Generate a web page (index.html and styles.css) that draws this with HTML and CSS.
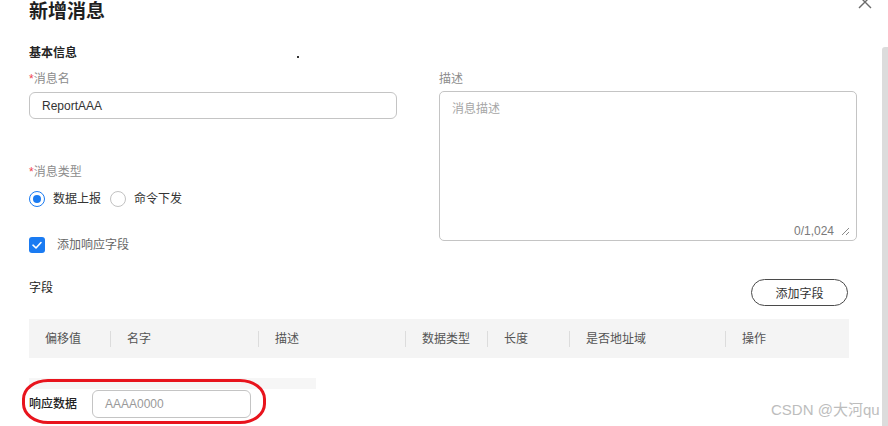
FILE: index.html
```html
<!DOCTYPE html>
<html lang="zh-CN">
<head>
    <meta charset="UTF-8">
    <meta name="viewport" content="width=device-width, initial-scale=1.0">
    <title>新增消息</title>
    <link rel="stylesheet" href="styles.css">
</head>
<body>
    <div class="dialog">
        <h1 class="title">新增消息</h1>
        <div class="close">
            <svg width="16" height="16" viewBox="0 0 16 16"><path d="M2 2 L14 14 M14 2 L2 14" stroke="#6b6b6b" stroke-width="1.4" fill="none"/></svg>
        </div>

        <div class="section-title">基本信息<span class="dot"></span></div>

        <div class="form-grid">
            <div class="col">
                <div class="label"><span class="req">*</span>消息名</div>
                <div class="input name-input">ReportAAA</div>

                <div class="label type-label"><span class="req">*</span>消息类型</div>
                <div class="radios">
                    <div class="radio-item"><span class="radio checked"></span>数据上报</div>
                    <div class="radio-item"><span class="radio"></span>命令下发</div>
                </div>

                <div class="check-row">
                    <span class="checkbox">
                        <svg width="16" height="16" viewBox="0 0 16 16"><path d="M4 8.2 L7 11 L12 5.5" stroke="#fff" stroke-width="1.6" fill="none" stroke-linecap="round" stroke-linejoin="round"/></svg>
                    </span>
                    添加响应字段
                </div>
            </div>
            <div class="col">
                <div class="label desc-label">描述</div>
                <div class="textarea">
                    <span class="placeholder">消息描述</span>
                    <span class="counter">0/1,024
                        <svg width="9" height="9" viewBox="0 0 9 9"><path d="M1 8 L8 1 M5 8 L8 5" stroke="#8a8a8a" stroke-width="1" fill="none"/></svg>
                    </span>
                </div>
            </div>
        </div>

        <div class="fields-head">
            <div class="fields-title">字段</div>
            <div class="btn">添加字段</div>
        </div>

        <div class="table-head">
            <div class="th">偏移值</div>
            <div class="th">名字</div>
            <div class="th">描述</div>
            <div class="th">数据类型</div>
            <div class="th">长度</div>
            <div class="th">是否地址域</div>
            <div class="th">操作</div>
        </div>

        <div class="scroll-track"></div>

        <div class="resp-row">
            <div class="resp-label">响应数据</div>
            <div class="input resp-input">AAAA0000</div>
        </div>
    </div>

    <div class="mark"></div>
    <div class="watermark">CSDN @大河qu</div>
    <div class="scrollbar"></div>
</body>
</html>
```

FILE: styles.css
```css
body { margin: 0; padding: 0; background: #fff; font-family: "Liberation Sans", "Noto Sans CJK SC", sans-serif; font-size: 12px; color: #333; overflow: hidden; }
.dialog { padding-left: 29px; width: 828px; }
.title { margin: 0; font-size: 19px; line-height: 24px; font-weight: bold; color: #1f1f1f; }
.close { position: absolute; left: 857px; top: -6px; width: 16px; height: 16px; }
.close svg { display: block; }

.section-title { margin-top: 21px; line-height: 16px; font-weight: bold; color: #252525; }
.dot { display: inline-block; width: 2px; height: 2px; background: #333; margin-left: 220px; vertical-align: -1px; }

.form-grid { display: grid; grid-template-columns: 368px 418px; column-gap: 42px; margin-top: 10px; align-items: start; }
.label { line-height: 16px; color: #8c8c8c; }
.req { color: #f0454f; }
.input { box-sizing: border-box; border: 1px solid #c4c4c4; border-radius: 6px; padding-left: 12px; display: flex; align-items: center; }
.name-input { height: 27px; margin-top: 5px; color: #333; }
.type-label { margin-top: 45px; }

.radios { display: flex; gap: 9px; margin-top: 11px; line-height: 16px; color: #333; }
.radio-item { display: flex; align-items: center; gap: 8px; }
.radio { box-sizing: border-box; width: 16px; height: 16px; border-radius: 50%; border: 1px solid #c2c2c2; display: flex; align-items: center; justify-content: center; }
.radio.checked { border: 1.5px solid #1a7bf2; }
.radio.checked::after { content: ""; width: 8px; height: 8px; border-radius: 50%; background: #1a7bf2; }

.check-row { display: flex; align-items: center; gap: 12px; margin-top: 30px; line-height: 16px; color: #666; }
.checkbox { width: 16px; height: 16px; border-radius: 3px; background: #1a7bf2; }
.checkbox svg { display: block; }

.desc-label { margin-top: 0; }
.textarea { box-sizing: border-box; height: 150px; margin-top: 4px; border: 1px solid #c4c4c4; border-radius: 5px; padding: 9px 6px 1px 12px; display: flex; flex-direction: column; justify-content: space-between; line-height: 16px; }
.placeholder { color: #a6a6a6; }
.counter { align-self: flex-end; color: #7a7a7a; display: flex; align-items: center; gap: 7px; }

.fields-head { display: flex; justify-content: space-between; align-items: flex-start; width: 820px; margin-top: 26px; }
.fields-title { margin-top: 1px; line-height: 16px; color: #252525; }
.btn { box-sizing: border-box; width: 97px; height: 27px; margin-right: 1px; border: 1px solid #4a4a4a; border-radius: 14px; display: flex; align-items: center; justify-content: center; color: #333; }

.table-head { display: grid; grid-template-columns: 81px 148px 147px 82px 82px 156px 124px; align-items: center; width: 820px; height: 39px; margin-top: 13px; background: #f4f4f4; }
.th { height: 16px; line-height: 16px; padding-left: 16px; color: #555; border-left: 1px solid #dcdcdc; }
.th:first-child { border-left: none; }

.scroll-track { width: 287px; height: 11px; margin-top: 20px; background: #f6f6f6; }

.resp-row { display: flex; align-items: center; margin-top: 1px; }
.resp-label { width: 63px; line-height: 16px; color: #222; font-weight: 500; }
.resp-input { width: 159px; height: 28px; color: #999; }

.mark { position: absolute; left: 22px; top: 379px; width: 244px; height: 45px; box-sizing: border-box; border: 3px solid #e8141d; border-radius: 26px / 20px; }
.watermark { position: absolute; left: 771px; top: 401px; font-size: 15px; line-height: 18px; color: #bdbdbd; white-space: nowrap; }
.scrollbar { position: absolute; left: 882px; top: 47px; width: 6px; height: 379px; background: #dcdcdc; border-radius: 3px 0 0 0; }
```
